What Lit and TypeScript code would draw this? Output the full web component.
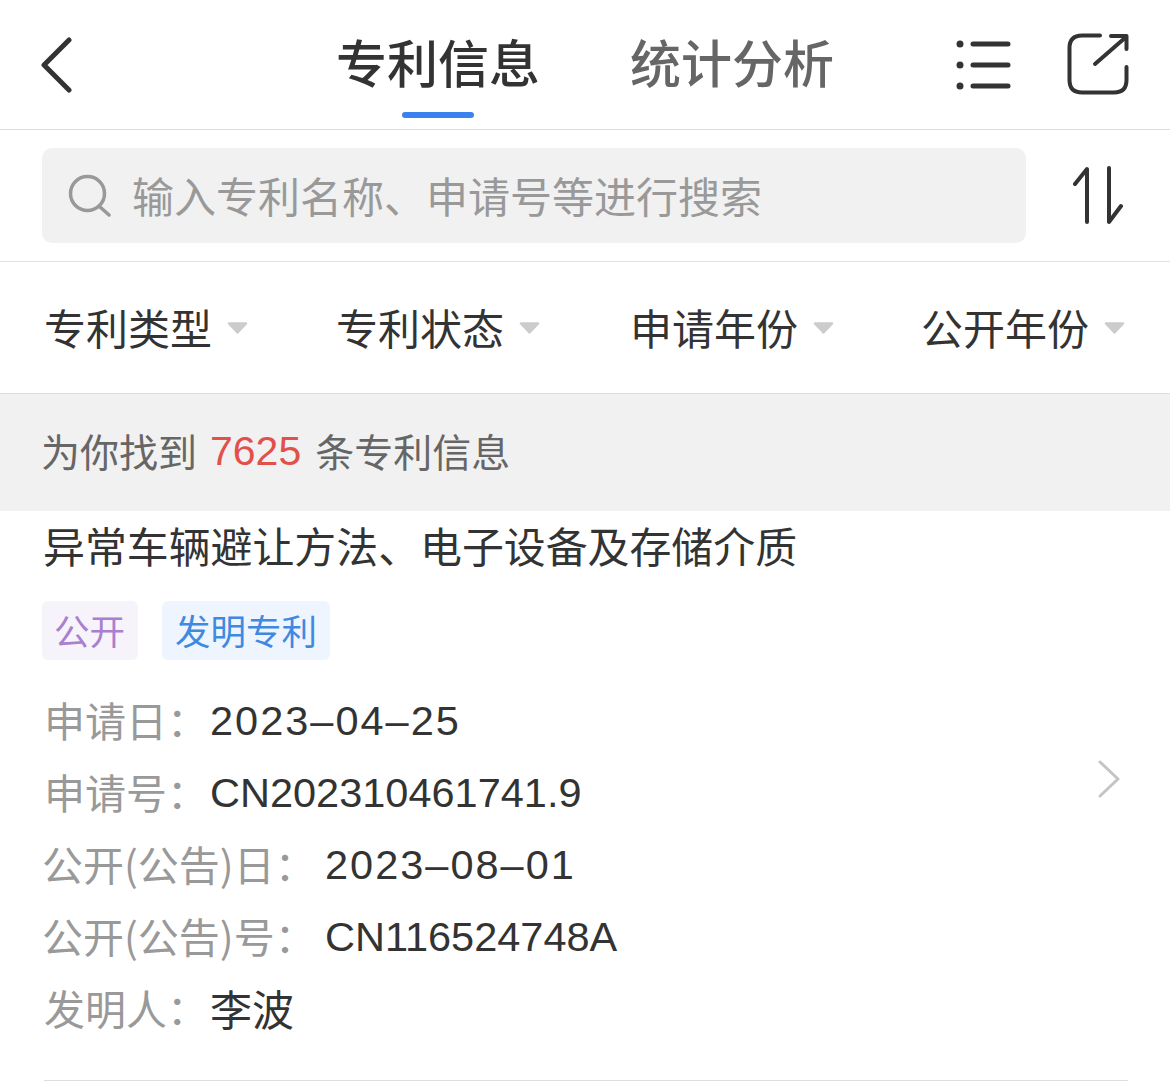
import { LitElement, html, css } from 'lit';
import { customElement } from 'lit/decorators.js';

const filters = ['专利类型', '专利状态', '申请年份', '公开年份'];

const fields = [
  { label: '申请日', value: '2023–04–25', wide: false, kind: 'date' },
  { label: '申请号', value: 'CN202310461741.9', wide: false, kind: 'text' },
  { label: '公开(公告)日', value: '2023–08–01', wide: true, kind: 'date' },
  { label: '公开(公告)号', value: 'CN116524748A', wide: true, kind: 'text' },
  { label: '发明人', value: '李波', wide: false, kind: 'cjk' },
];

@customElement('app-root')
export class AppRoot extends LitElement {
  static override styles = css`
    :host {
      display: block;
      width: 1170px;
      height: 1085px;
      overflow: hidden;
      background: #fff;
      font-family: 'Noto Sans CJK SC', 'Liberation Sans', sans-serif;
      color: #333;
    }
    svg {
      display: block;
      flex: none;
      fill: none;
      stroke-linecap: round;
      stroke-linejoin: round;
    }
    .header {
      display: flex;
      height: 129px;
      align-items: flex-start;
      border-bottom: 1px solid #dedede;
      box-sizing: content-box;
    }
    .back {
      margin: 37px 0 0 41px;
    }
    .tabs {
      display: flex;
      gap: 90px;
      margin-left: 263px;
    }
    .tab {
      display: flex;
      flex-direction: column;
      align-items: center;
      font-size: 51px;
      font-weight: 500;
      line-height: 64px;
      padding-top: 29px;
      color: #666;
    }
    .tab.active {
      color: #333;
    }
    .tab.active::after {
      content: '';
      width: 72px;
      height: 6px;
      margin-top: 19px;
      border-radius: 3px;
      background: #3b82ee;
    }
    .list-icon {
      margin: 40px 0 0 121px;
    }
    .share-icon {
      margin: 33px 0 0 56px;
    }
    .search-row {
      display: flex;
      height: 131px;
      align-items: flex-start;
      border-bottom: 1px solid #e2e2e2;
    }
    .search {
      display: flex;
      align-items: center;
      width: 984px;
      height: 95px;
      margin: 18px 0 0 42px;
      padding-left: 26px;
      box-sizing: border-box;
      border-radius: 10px;
      background: #f1f1f1;
      font-size: 42px;
      color: #999;
    }
    .search svg {
      margin-right: 21px;
    }
    .search span,
    .filter span {
      margin-bottom: 3px;
    }
    .sort-icon {
      margin: 36px 0 0 47px;
    }
    .filters {
      display: grid;
      grid-template-columns: 292px 294px 291px auto;
      height: 131px;
      padding-left: 44px;
      align-items: center;
      border-bottom: 1px solid #dedede;
      font-size: 42px;
    }
    .filter {
      display: flex;
      align-items: center;
      gap: 15px;
    }
    .count {
      display: flex;
      align-items: center;
      height: 117px;
      padding: 0 0 6px 41px;
      box-sizing: border-box;
      background: #f1f1f1;
      font-size: 39px;
      color: #666;
    }
    .count b {
      margin: 4px 14px 0 13px;
      font-family: 'Liberation Sans', sans-serif;
      font-size: 41px;
      font-weight: 400;
      color: #e2504a;
    }
    .card {
      margin: 0 42px 0 44px;
      height: 570px;
      border-bottom: 1px solid #ddd;
      box-sizing: border-box;
    }
    .title {
      margin-left: -1px;
      font-size: 41.9px;
      line-height: 68px;
      white-space: nowrap;
    }
    .tags {
      display: flex;
      gap: 24px;
      margin: 22px 0 25px -2px;
    }
    .tag {
      height: 59px;
      line-height: 57px;
      padding: 0 13px;
      border-radius: 6px;
      font-size: 35.5px;
    }
    .tag.pub {
      padding-left: 12px;
      background: #f6f3fb;
      color: #a97fd0;
    }
    .tag.kind {
      background: #eef5fe;
      color: #3f8ae0;
    }
    .body {
      display: flex;
      justify-content: space-between;
    }
    .row {
      display: flex;
      height: 72px;
      align-items: center;
      font-size: 41.5px;
      white-space: nowrap;
    }
    .label {
      width: 166px;
      padding-bottom: 4px;
      font-size: 41px;
      color: #999;
    }
    .label.wide {
      width: 283px;
      margin-left: -2px;
    }
    .value {
      font-family: 'Liberation Sans', 'Noto Sans CJK SC', sans-serif;
    }
    .value.date {
      letter-spacing: 2px;
    }
    .value.cjk {
      padding-bottom: 4px;
      font-size: 42px;
    }
    .chevron {
      margin: 75px 7px 0 0;
    }
  `;

  override render() {
    return html`
      <div class="header">
        <svg class="back" width="32" height="56" viewBox="0 0 32 56" stroke="#333" stroke-width="5">
          <path d="M28 3 3 28l25 25" />
        </svg>
        <div class="tabs">
          <div class="tab active">专利信息</div>
          <div class="tab">统计分析</div>
        </div>
        <svg class="list-icon" width="56" height="50" viewBox="0 0 56 50" stroke="#333" stroke-width="5">
          <path d="M5 4h0M5 25h0M5 46h0" stroke-width="7" />
          <path d="M18 4h35M18 25h35M18 46h35" />
        </svg>
        <svg class="share-icon" width="62" height="62" viewBox="0 0 62 62" stroke="#333" stroke-width="4">
          <path d="M33 2.500H15Q2.500 2.500 2.500 15v32Q2.500 59.500 15 59.500h32Q59.500 59.500 59.500 47V34" />
          <path d="M28 31 59 4M44 3h15.500v13" />
        </svg>
      </div>
      <div class="search-row">
        <div class="search">
          <svg width="43" height="43" viewBox="0 0 43 43" stroke="#999" stroke-width="3.500">
            <circle cx="19.500" cy="19.500" r="17" />
            <path d="M31 32l10 9" />
          </svg>
          <span>输入专利名称、申请号等进行搜索</span>
        </div>
        <svg class="sort-icon" width="52" height="58" viewBox="0 0 52 58" stroke="#333" stroke-width="4">
          <path d="M2 18 14 3v53M36 2v54l12-16" />
        </svg>
      </div>
      <div class="filters">
        ${filters.map(
          (f) => html`<div class="filter">
            <span>${f}</span>
            <svg width="21" height="12" viewBox="0 0 21 12">
              <path d="M2 1.500h17L10.500 10.500z" fill="#ccc" stroke="#ccc" stroke-width="2.500" />
            </svg>
          </div>`
        )}
      </div>
      <div class="count">为你找到<b>7625</b>条专利信息</div>
      <div class="card">
        <div class="title">异常车辆避让方法、电子设备及存储介质</div>
        <div class="tags">
          <div class="tag pub">公开</div>
          <div class="tag kind">发明专利</div>
        </div>
        <div class="body">
          <div>
            ${fields.map(
              (f) => html`<div class="row">
                <div class="label ${f.wide ? 'wide' : ''}">${f.label}：</div>
                <div class="value ${f.kind}">${f.value}</div>
              </div>`
            )}
          </div>
          <svg class="chevron" width="24" height="38" viewBox="0 0 24 38" stroke="#c4c4c4" stroke-width="3">
            <path d="M3 2l18 17L3 36" />
          </svg>
        </div>
      </div>
    `;
  }
}

declare global {
  interface HTMLElementTagNameMap {
    'app-root': AppRoot;
  }
}
